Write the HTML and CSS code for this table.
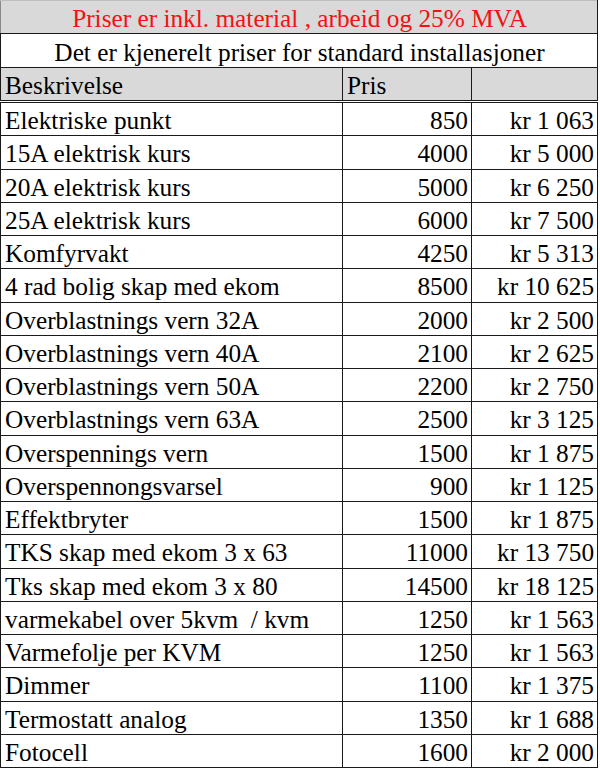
FILE: index.html
```html
<!DOCTYPE html>
<html lang="no">
<head>
<meta charset="utf-8">
<title>Priser</title>
<link rel="stylesheet" href="styles.css">
</head>
<body>
<table class="prices">
  <colgroup>
    <col class="c-desc">
    <col class="c-pris">
    <col class="c-mva">
  </colgroup>
  <tr class="title-row"><td colspan="3" class="title">Priser er inkl. material , arbeid og 25% MVA</td></tr>
  <tr class="sub-row"><td colspan="3" class="sub">Det er kjenerelt priser for standard installasjoner</td></tr>
  <tr class="head-row"><td>Beskrivelse</td><td>Pris</td><td></td></tr>
  <tr><td>Elektriske punkt</td><td class="num">850</td><td class="num">kr 1 063</td></tr>
  <tr><td>15A elektrisk kurs</td><td class="num">4000</td><td class="num">kr 5 000</td></tr>
  <tr><td>20A elektrisk kurs</td><td class="num">5000</td><td class="num">kr 6 250</td></tr>
  <tr><td>25A elektrisk kurs</td><td class="num">6000</td><td class="num">kr 7 500</td></tr>
  <tr><td>Komfyrvakt</td><td class="num">4250</td><td class="num">kr 5 313</td></tr>
  <tr><td>4 rad bolig skap med ekom</td><td class="num">8500</td><td class="num">kr 10 625</td></tr>
  <tr><td>Overblastnings vern 32A</td><td class="num">2000</td><td class="num">kr 2 500</td></tr>
  <tr><td>Overblastnings vern 40A</td><td class="num">2100</td><td class="num">kr 2 625</td></tr>
  <tr><td>Overblastnings vern 50A</td><td class="num">2200</td><td class="num">kr 2 750</td></tr>
  <tr><td>Overblastnings vern 63A</td><td class="num">2500</td><td class="num">kr 3 125</td></tr>
  <tr><td>Overspennings vern</td><td class="num">1500</td><td class="num">kr 1 875</td></tr>
  <tr><td>Overspennongsvarsel</td><td class="num">900</td><td class="num">kr 1 125</td></tr>
  <tr><td>Effektbryter</td><td class="num">1500</td><td class="num">kr 1 875</td></tr>
  <tr><td>TKS skap med ekom 3 x 63</td><td class="num">11000</td><td class="num">kr 13 750</td></tr>
  <tr><td>Tks skap med ekom 3 x 80</td><td class="num">14500</td><td class="num">kr 18 125</td></tr>
  <tr><td>varmekabel over 5kvm&nbsp; / kvm</td><td class="num">1250</td><td class="num">kr 1 563</td></tr>
  <tr><td>Varmefolje per KVM</td><td class="num">1250</td><td class="num">kr 1 563</td></tr>
  <tr><td>Dimmer</td><td class="num">1100</td><td class="num">kr 1 375</td></tr>
  <tr><td>Termostatt analog</td><td class="num">1350</td><td class="num">kr 1 688</td></tr>
  <tr><td>Fotocell</td><td class="num">1600</td><td class="num">kr 2 000</td></tr>
</table>
</body>
</html>
```

FILE: styles.css
```css
html, body {
  margin: 0;
  padding: 0;
  background: #ffffff;
}

.prices {
  border-collapse: collapse;
  table-layout: fixed;
  width: 597px;
  font-family: "Liberation Serif", "Times New Roman", serif;
  font-size: 25.3px;
  color: #000;
}

.c-desc { width: 342px; }
.c-pris { width: 129px; }
.c-mva { width: 126px; }

.prices td {
  border: 1px solid #1a1a1a;
  padding: 2px 3px 0 4px;
  height: 30px;
  line-height: 28px;
  white-space: nowrap;
  overflow: hidden;
  vertical-align: middle;
}

.prices td.num {
  text-align: right;
}

.title-row td {
  background: #d9d9d9;
  border-top: 1px solid #bdbdbd;
  border-left-color: #8a8a8a;
  color: #f21212;
  text-align: center;
  height: 30px;
}

.sub-row td {
  text-align: center;
  height: 31px;
}

.head-row td {
  background: #d9d9d9;
  height: 30px;
  border-bottom: 3px double #1a1a1a;
}

.prices tr:not(.title-row):not(.sub-row):not(.head-row) td {
  height: 30.25px;
}
```
